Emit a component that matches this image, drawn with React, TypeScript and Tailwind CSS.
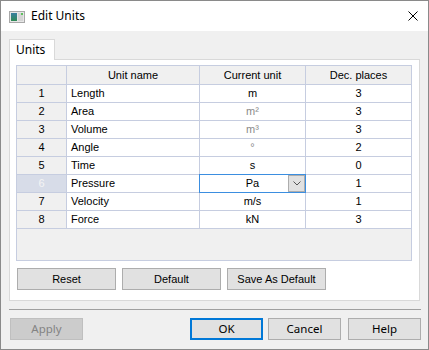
import React from "react";

type Row = { n: number; name: string; unit: string; dec: string; gray?: boolean; sel?: boolean };

const rows: Row[] = [
  { n: 1, name: "Length", unit: "m", dec: "3" },
  { n: 2, name: "Area", unit: "m²", dec: "3", gray: true },
  { n: 3, name: "Volume", unit: "m³", dec: "3", gray: true },
  { n: 4, name: "Angle", unit: "°", dec: "2", gray: true },
  { n: 5, name: "Time", unit: "s", dec: "0" },
  { n: 6, name: "Pressure", unit: "Pa", dec: "1", sel: true },
  { n: 7, name: "Velocity", unit: "m/s", dec: "1" },
  { n: 8, name: "Force", unit: "kN", dec: "3" },
];

function AppIcon() {
  return (
    <svg width="16" height="12" viewBox="0 0 16 12">
      <defs>
        <linearGradient id="g1" x1="0" y1="0" x2="0" y2="1">
          <stop offset="0" stopColor="#3a7fa0" />
          <stop offset="1" stopColor="#2f8a55" />
        </linearGradient>
      </defs>
      <rect x="0.5" y="0.5" width="15" height="11" fill="#e6e6e6" stroke="#a8a8a8" />
      <rect x="2" y="2" width="6" height="8" fill="url(#g1)" />
      <rect x="9" y="2" width="5" height="8" fill="#d4d4d4" />
      <rect x="12" y="2" width="2" height="2" fill="#5cbf5c" />
    </svg>
  );
}

export default function App() {
  return (
    <div className="w-[429px] h-[350px] border border-[#8a8a8a] flex flex-col bg-[#f0f0f0] font-['Liberation_Sans',Arial,sans-serif] text-[11px] text-black">
      {/* Title bar */}
      <div className="h-[30px] bg-white flex items-center shrink-0">
        <div className="ml-[8px] mt-[1px] flex items-center">
          <AppIcon />
        </div>
        <span className="ml-[6px] font-['Noto_Sans',sans-serif] text-[12px] leading-none">Edit Units</span>
        <div className="flex-1" />
        <svg width="10" height="10" viewBox="0 0 10 10" className="mr-[10px]">
          <path d="M0.5 0.5 L9.5 9.5 M9.5 0.5 L0.5 9.5" stroke="#000" strokeWidth="1" />
        </svg>
      </div>

      {/* Body */}
      <div className="flex-1 flex flex-col pt-[8px]">
        {/* Tab */}
        <div className="ml-[8px] w-[46px] h-[21px] -mb-[1px] relative z-10 bg-white border border-b-0 border-[#d9d9d9] flex items-center pl-[6px] font-['Noto_Sans',sans-serif] text-[12px]">
          Units
        </div>
        {/* Tab page */}
        <div className="ml-[8px] w-[411px] h-[242px] border border-[#d9d9d9] bg-white flex flex-col pt-[5px] pl-[6px]">
          {/* Grid */}
          <div className="w-[396px] h-[196px] border border-[#c6cde0] bg-[#f0f0f0] flex flex-col">
            <div className="flex h-[19px] border-b border-[#c6cde0]">
              <div className="w-[50px] border-r border-[#c6cde0]" />
              <div className="w-[133px] border-r border-[#c6cde0] flex items-center justify-center">Unit name</div>
              <div className="w-[106px] border-r border-[#c6cde0] flex items-center justify-center">Current unit</div>
              <div className="flex-1 flex items-center justify-center">Dec. places</div>
            </div>
            {rows.map((r) => (
              <div key={r.n} className="flex h-[18px] border-b border-[#c6cde0]">
                <div
                  className={
                    r.sel
                      ? "w-[50px] border-r border-[#c6cde0] bg-[#d7dce8] text-[#f4f4f4] flex items-center justify-center"
                      : "w-[50px] border-r border-[#c6cde0] bg-[#f0f0f0] flex items-center justify-center"
                  }
                >
                  {r.n}
                </div>
                <div className="w-[133px] border-r border-[#c6cde0] bg-white flex items-center pl-[4px]">{r.name}</div>
                <div
                  className={
                    r.gray
                      ? "w-[106px] border-r border-[#c6cde0] bg-white flex items-center justify-center text-[#8a8a8a]"
                      : "w-[106px] border-r border-[#c6cde0] bg-white flex items-center justify-center relative"
                  }
                >
                  {r.sel ? (
                    <>
                      <div className="absolute top-[-1px] left-[-1px] right-[-1px] bottom-[-1px] border border-[#3b8ee0] flex justify-end">
                        <div className="w-[17px] h-full border border-[#adadad] bg-[#e1e1e1] flex items-center justify-center">
                          <svg width="8" height="5" viewBox="0 0 8 5">
                            <path d="M0.5 0.5 L4 4 L7.5 0.5" stroke="#555" strokeWidth="1" fill="none" />
                          </svg>
                        </div>
                      </div>
                      <span className="relative">{r.unit}</span>
                    </>
                  ) : (
                    r.unit
                  )}
                </div>
                <div className="flex-1 bg-white flex items-center justify-center">{r.dec}</div>
              </div>
            ))}
          </div>
          {/* Grid buttons */}
          <div className="flex gap-[6px] mt-[7px] ml-[1px]">
            <div className="w-[99px] h-[22px] bg-[#e1e1e1] border border-[#adadad] flex items-center justify-center">Reset</div>
            <div className="w-[99px] h-[22px] bg-[#e1e1e1] border border-[#adadad] flex items-center justify-center">Default</div>
            <div className="w-[99px] h-[22px] bg-[#e1e1e1] border border-[#adadad] flex items-center justify-center">Save As Default</div>
          </div>
        </div>

        {/* Separator */}
        <div className="ml-[8px] w-[412px] mt-[8px] h-[1px] bg-[#a0a0a0]" />

        {/* Dialog buttons */}
        <div className="flex mt-[8px] font-['Noto_Sans',sans-serif] text-[11.5px]">
          <div className="ml-[9px] w-[73px] h-[22px] bg-[#cccccc] border border-[#bfbfbf] text-[#838383] flex items-center justify-center">Apply</div>
          <div className="flex-1" />
          <div className="w-[73px] h-[22px] bg-[#e1e1e1] border-2 border-[#0078d7] flex items-center justify-center">OK</div>
          <div className="ml-[5px] w-[73px] h-[22px] bg-[#e1e1e1] border border-[#adadad] flex items-center justify-center">Cancel</div>
          <div className="ml-[7px] mr-[7px] w-[73px] h-[22px] bg-[#e1e1e1] border border-[#adadad] flex items-center justify-center">Help</div>
        </div>
      </div>
    </div>
  );
}
